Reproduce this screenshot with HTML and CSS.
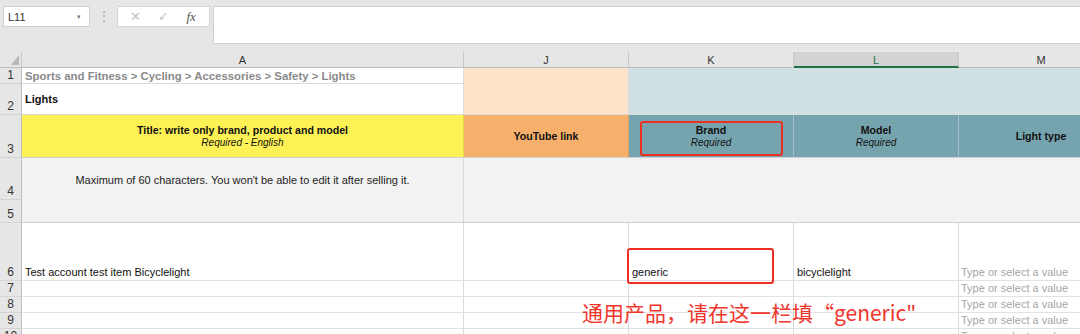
FILE: index.html
```html
<!DOCTYPE html>
<html lang="en">
<head>
    <meta charset="UTF-8">
    <title>Lights - listing template</title>
    <link rel="stylesheet" href="styles.css">
</head>
<body>
<div class="formula-bar">
    <div class="name-box">L11 <span class="caret">&#9662;</span></div>
    <div class="dots">&#8942;</div>
    <div class="fx-buttons">
        <span class="fx-btn">&#10005;</span>
        <span class="fx-btn">&#10003;</span>
        <span class="fx-btn fx">fx</span>
    </div>
    <div class="formula-input"></div>
</div>

<div class="sheet">
    <!-- cabecera de columnas -->
    <div class="corner"><svg width="8" height="10" viewBox="0 0 8 10"><polygon points="8,0 8,10 0,10" fill="#b9b9b9"/></svg></div>
    <div class="colhead">A</div>
    <div class="colhead">J</div>
    <div class="colhead">K</div>
    <div class="colhead active">L</div>
    <div class="colhead">M</div>

    <!-- fila 1 y 2 -->
    <div class="rowhead r1">1</div>
    <div class="cell crumb">Sports and Fitness &gt; Cycling &gt; Accessories &gt; Safety &gt; Lights</div>
    <div class="cell peach merge-j12"></div>
    <div class="cell lightblue merge-km12"></div>
    <div class="rowhead r2">2</div>
    <div class="cell category">Lights</div>

    <!-- fila 3: cabeceras de campos -->
    <div class="rowhead">3</div>
    <div class="cell head yellow"><b>Title: write only brand, product and model</b><i>Required - English</i></div>
    <div class="cell head orange"><b>YouTube link</b></div>
    <div class="cell head teal"><b>Brand</b><i>Required</i></div>
    <div class="cell head teal"><b>Model</b><i>Required</i></div>
    <div class="cell head teal"><b>Light type</b></div>

    <!-- filas 4 y 5 -->
    <div class="rowhead r4">4</div>
    <div class="cell grey note merge-a45">Maximum of 60 characters. You won't be able to edit it after selling it.</div>
    <div class="cell grey merge-jm45"></div>
    <div class="rowhead r5">5</div>

    <!-- fila 6 -->
    <div class="rowhead r6">6</div>
    <div class="cell data r6">Test account test item Bicyclelight</div>
    <div class="cell data r6"></div>
    <div class="cell data r6">generic</div>
    <div class="cell data r6">bicyclelight</div>
    <div class="cell data r6 hint">Type or select a value</div>

    <div class="rowhead">7</div>
    <div class="cell data"></div><div class="cell data"></div><div class="cell data"></div><div class="cell data"></div>
    <div class="cell data hint">Type or select a value</div>
    <div class="rowhead">8</div>
    <div class="cell data"></div><div class="cell data"></div><div class="cell data"></div><div class="cell data"></div>
    <div class="cell data hint">Type or select a value</div>
    <div class="rowhead">9</div>
    <div class="cell data"></div><div class="cell data"></div><div class="cell data"></div><div class="cell data"></div>
    <div class="cell data hint">Type or select a value</div>
    <div class="rowhead">10</div>
    <div class="cell data"></div><div class="cell data"></div><div class="cell data"></div><div class="cell data"></div>
    <div class="cell data hint">Type or select a value</div>

    <!-- anotaciones -->
    <div class="mark mark-brand"></div>
    <div class="mark mark-generic"></div>
    <div class="annotation">通用产品，请在这一栏填“generic"</div>
</div>
</body>
</html>
```

FILE: styles.css
```css
body {
    margin: 0;
    width: 1080px;
    height: 334px;
    overflow: hidden;
    background: #e6e6e6;
    font-family: "Liberation Sans", Arial, sans-serif;
    font-size: 11px;
    color: #111;
}

/* barra de fórmulas */
.formula-bar {
    height: 52px;
    display: flex;
    align-items: flex-start;
    padding-top: 6px;
    box-sizing: border-box;
}
.name-box {
    margin-left: 3px;
    width: 87px;
    height: 21px;
    box-sizing: border-box;
    background: #fff;
    border: 1px solid #cfcfcf;
    display: flex;
    align-items: center;
    justify-content: space-between;
    padding: 0 8px 0 4px;
    font-size: 11px;
    color: #333;
}
.caret { font-size: 7px; color: #777; }
.dots {
    width: 27px;
    text-align: center;
    color: #b0b0b0;
    font-size: 14px;
    line-height: 21px;
}
.fx-buttons {
    width: 93px;
    height: 21px;
    box-sizing: border-box;
    background: #fff;
    border: 1px solid #d6d6d6;
    display: flex;
    align-items: center;
    justify-content: space-around;
    padding: 0 4px;
}
.fx-btn { color: #c2c2c2; font-size: 13px; width: 24px; text-align: center; }
.fx-btn.fx {
    color: #555;
    font-family: "Liberation Serif", serif;
    font-style: italic;
    font-size: 13px;
}
.formula-input {
    margin-left: 3px;
    flex: 1;
    height: 38px;
    box-sizing: border-box;
    background: #fff;
    border: 1px solid #cfcfcf;
    border-right: none;
}

/* hoja */
.sheet {
    position: relative;
    display: grid;
    grid-template-columns: 22px 442px 165px 165px 165px 165px;
    grid-template-rows: 16px 16px 31px 43px 42px 23px 58px 16px 16px 16px 16px;
    background: #fff;
}
.corner, .colhead {
    background: #e6e6e6;
    border-right: 1px solid #c8c8c8;
    border-bottom: 1px solid #bdbdbd;
    box-sizing: border-box;
}
.corner {
    display: flex;
    align-items: flex-end;
    justify-content: flex-end;
    padding: 0 2px 2px 0;
}
.colhead {
    text-align: center;
    line-height: 16px;
    font-size: 11px;
    color: #333;
}
.colhead.active {
    background: #d3d3d3;
    color: #217346;
    border-bottom: 2px solid #217346;
}
.rowhead {
    grid-column: 1;
    background: #e6e6e6;
    border-right: 1px solid #bdbdbd;
    border-bottom: 1px solid #d4d4d4;
    box-sizing: border-box;
    display: flex;
    align-items: flex-end;
    justify-content: center;
    font-size: 12px;
    color: #333;
    line-height: 15px;
}
.cell {
    box-sizing: border-box;
    border-right: 1px solid #dadada;
    border-bottom: 1px solid #dadada;
    padding: 0 3px;
    display: flex;
    overflow: hidden;
    white-space: nowrap;
}
.crumb {
    align-items: center;
    font-weight: bold;
    color: #8a8a8a;
    font-size: 11.4px;
}
.category {
    grid-column: 2;
    align-items: center;
    font-weight: bold;
}
.merge-j12 { grid-column: 3; grid-row: 2 / span 2; }
.merge-km12 { grid-column: 4 / span 3; grid-row: 2 / span 2; }
.peach { background: #fde4ca; }
.lightblue { background: #d0e0e4; }

.head {
    flex-direction: column;
    align-items: center;
    justify-content: center;
    text-align: center;
    border-bottom: 1px solid #d0d0d0;
}
.head b { font-size: 10.6px; line-height: 13px; }
.head i { font-size: 10px; line-height: 12px; }
.yellow { background: #fef155; border-right-color: #e5d84c; }
.orange { background: #f6b06c; border-right-color: #e0a060; }
.teal { background: #76a4ae; border-right-color: #a3c2c9; }

.grey { background: #f2f2f2; }
.note {
    justify-content: center;
    align-items: flex-start;
    padding-top: 16px;
    font-size: 11px;
    color: #222;
}
.merge-a45 { grid-column: 2; grid-row: 5 / span 2; border-bottom-color: #cdcdcd; }
.merge-jm45 { grid-column: 3 / span 4; grid-row: 5 / span 2; border-bottom-color: #cdcdcd; }
.rowhead.r5 { grid-row: 6; }

.data {
    align-items: flex-end;
    line-height: 15px;
    font-size: 11px;
    border-bottom-color: #e2e2e2;
    border-right-color: #dadada;
}
.hint { color: #a6a6a6; padding-left: 2px; }

/* anotaciones sobre la hoja */
.mark {
    position: absolute;
    border: 2px solid #ec2f25;
    border-radius: 3px;
    box-sizing: border-box;
}
.mark-brand { left: 640px; top: 69px; width: 143px; height: 35px; }
.mark-generic { left: 627px; top: 196px; width: 147px; height: 36px; }
.annotation {
    position: absolute;
    left: 582px;
    top: 247px;
    font-family: "Noto Sans CJK SC", "Liberation Sans", sans-serif;
    font-size: 21px;
    line-height: 26px;
    color: #f0352c;
    white-space: nowrap;
}
```
